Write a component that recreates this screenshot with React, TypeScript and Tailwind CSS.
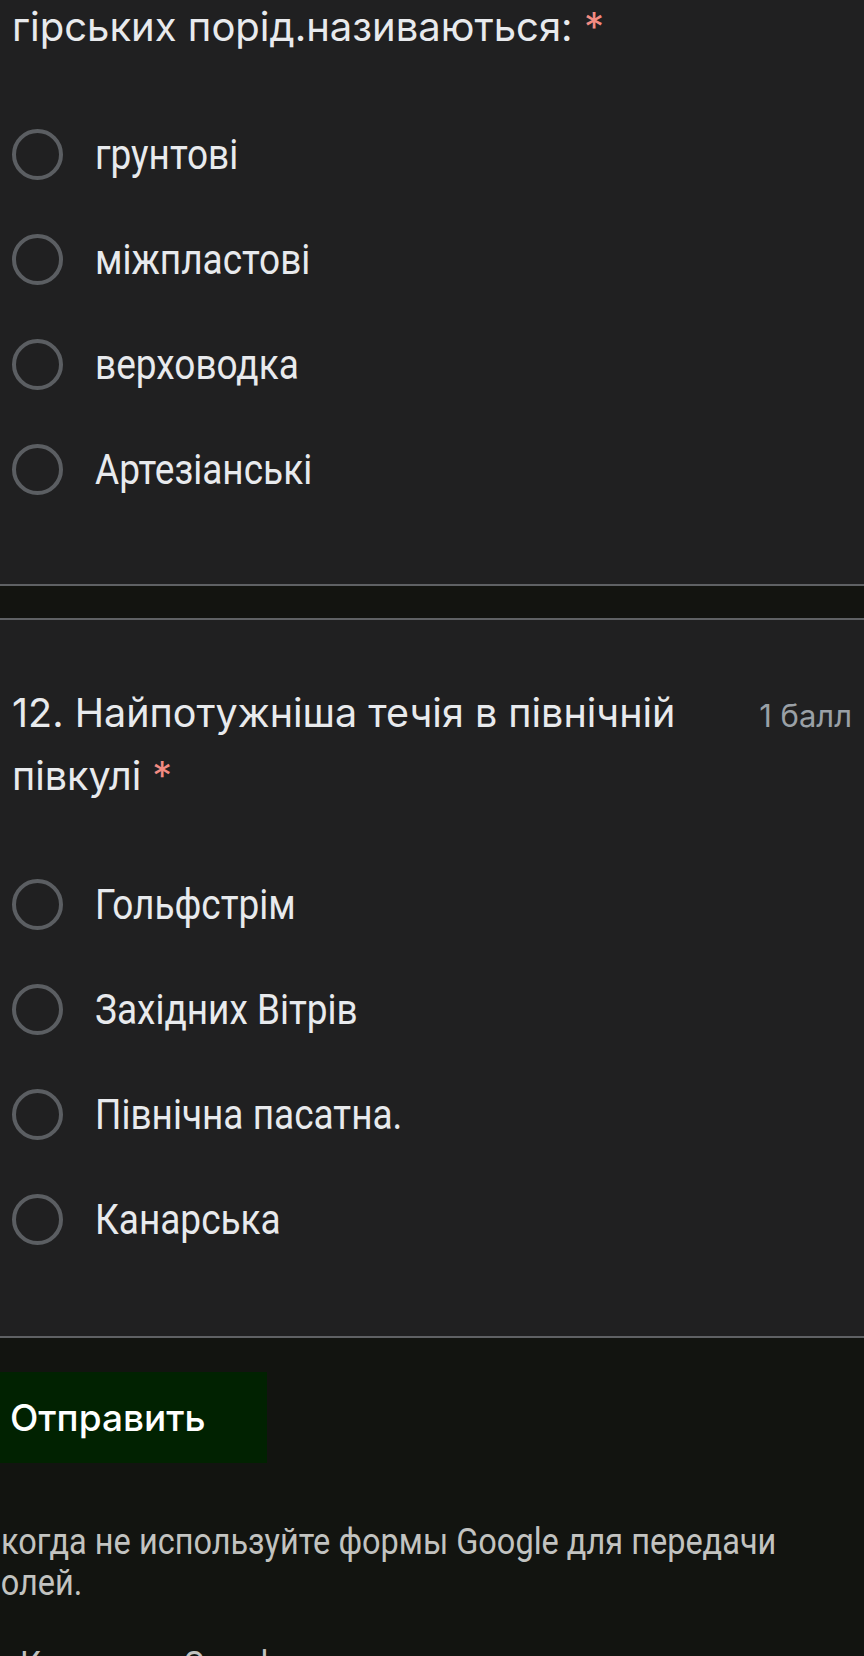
import React from "react";

const titleFont = { fontFamily: 'Inter, "Open Sans", sans-serif' };

function Radio({ label }: { label: string }) {
  return (
    <div className="flex h-[105px] shrink-0 items-center">
      <div className="ml-[12px] h-[51px] w-[51px] shrink-0 rounded-full border-[4px] border-[#5b5e62]" />
      <div className="ml-[32px] scale-y-[1.16] font-['Roboto',sans-serif] text-[37px] leading-none text-[#e8eaed]">
        {label}
      </div>
    </div>
  );
}

export default function App() {
  return (
    <div className="flex h-[1656px] w-[864px] flex-col overflow-hidden bg-[#121410]">
      {/* Card 1 */}
      <div className="shrink-0 border-b-2 border-[#5f6164] bg-[#202021] pb-[62px]">
        <div
          className="-mt-[5px] pl-[12px] text-[40px] leading-[63px] text-[#e8eaed]"
          style={titleFont}
        >
          гірських порід.називаються: <span className="text-[#f28b82]">*</span>
        </div>
        <div className="mt-[44px]">
          <Radio label="грунтові" />
          <Radio label="міжпластові" />
          <Radio label="верховодка" />
          <Radio label="Артезіанські" />
        </div>
      </div>

      {/* band */}
      <div className="h-[32px] shrink-0 bg-[#131410]" />

      {/* Card 2 */}
      <div className="shrink-0 border-y-2 border-[#5f6164] bg-[#202021] pb-[64px] pt-[62px]">
        <div className="flex items-baseline pl-[12px] pr-[12px]" style={titleFont}>
          <div className="flex-1 text-[39.5px] leading-[63px] text-[#e8eaed]">
            12. Найпотужніша течія в північній
            <br />
            півкулі <span className="text-[#f28b82]">*</span>
          </div>
          <div className="text-[31px] text-[#9aa0a6]">1 балл</div>
        </div>
        <div className="mt-[44px]">
          <Radio label="Гольфстрім" />
          <Radio label="Західних Вітрів" />
          <Radio label="Північна пасатна." />
          <Radio label="Канарська" />
        </div>
      </div>

      {/* Footer */}
      <div className="flex-1 shrink-0 bg-[#121410] pt-[34px]">
        <div
          className="flex h-[91px] w-[267px] items-center bg-[#012201] pl-[10px] text-[37px] font-medium text-white"
          style={titleFont}
        >
          Отправить
        </div>
        <div className="mt-[58px] font-['Roboto',sans-serif] text-[32.5px] leading-[41px] text-[#c2c3c0]">
          <div className="-ml-[41px] scale-y-[1.16] whitespace-nowrap">
            Никогда не используйте формы Google для передачи
          </div>
          <div className="-ml-[54px] scale-y-[1.16] whitespace-nowrap">паролей.</div>
          <div className="ml-[20px] mt-[41px] scale-y-[1.16] whitespace-nowrap">
            Компания Google не имеет никакого отношения к этому контенту.
          </div>
        </div>
      </div>
    </div>
  );
}
